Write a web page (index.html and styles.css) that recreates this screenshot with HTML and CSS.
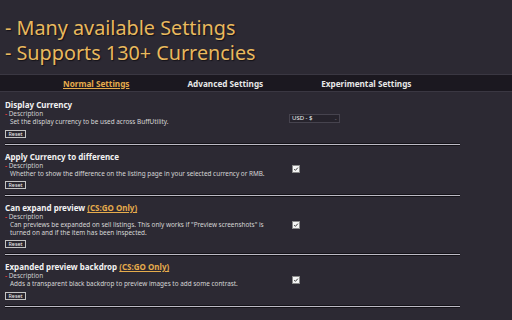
FILE: index.html
```html
<!DOCTYPE html>
<html lang="en">
<head>
    <meta charset="UTF-8">
    <meta name="viewport" content="width=device-width, initial-scale=1.0">
    <title>BuffUtility Settings</title>
    <link rel="stylesheet" href="styles.css">
</head>
<body>

    <!-- Promo header -->
    <div class="promo">
        <div class="promo-line">- Many available Settings</div>
        <div class="promo-line">- Supports 130+ Currencies</div>
    </div>

    <!-- Tabs -->
    <div class="tabs">
        <span class="tab active">Normal Settings</span>
        <span class="tab">Advanced Settings</span>
        <span class="tab">Experimental Settings</span>
    </div>

    <div class="settings">
        <div class="setting">
            <div class="setting-title">Display Currency</div>
            <div class="setting-row">
                <div class="setting-desc">
                    <div class="desc-label"><span class="dash">-</span> Description</div>
                    <div class="desc-text">Set the display currency to be used across BuffUtility.</div>
                </div>
                <div class="fake-select">USD - $<span class="caret">&#8964;</span></div>
            </div>
            <button class="reset">Reset</button>
            <div class="separator"></div>
        </div>

        <div class="setting">
            <div class="setting-title">Apply Currency to difference</div>
            <div class="setting-row">
                <div class="setting-desc">
                    <div class="desc-label"><span class="dash">-</span> Description</div>
                    <div class="desc-text">Whether to show the difference on the listing page in your selected currency or RMB.</div>
                </div>
                <span class="checkbox"><svg viewBox="0 0 8 8"><path d="M1.6 4.2 L3.2 5.8 L6.5 2.2" /></svg></span>
            </div>
            <button class="reset">Reset</button>
            <div class="separator"></div>
        </div>

        <div class="setting">
            <div class="setting-title">Can expand preview <span class="only">(CS:GO Only)</span></div>
            <div class="setting-row">
                <div class="setting-desc">
                    <div class="desc-label"><span class="dash">-</span> Description</div>
                    <div class="desc-text">Can previews be expanded on sell listings. This only works if "Preview screenshots" is turned on and if the item has been inspected.</div>
                </div>
                <span class="checkbox"><svg viewBox="0 0 8 8"><path d="M1.6 4.2 L3.2 5.8 L6.5 2.2" /></svg></span>
            </div>
            <button class="reset">Reset</button>
            <div class="separator"></div>
        </div>

        <div class="setting">
            <div class="setting-title">Expanded preview backdrop <span class="only">(CS:GO Only)</span></div>
            <div class="setting-row">
                <div class="setting-desc">
                    <div class="desc-label"><span class="dash">-</span> Description</div>
                    <div class="desc-text">Adds a transparent black backdrop to preview images to add some contrast.</div>
                </div>
                <span class="checkbox"><svg viewBox="0 0 8 8"><path d="M1.6 4.2 L3.2 5.8 L6.5 2.2" /></svg></span>
            </div>
            <button class="reset">Reset</button>
            <div class="separator"></div>
        </div>
    </div>

</body>
</html>
```

FILE: styles.css
```css
body {
    margin: 0;
    background: #2c2933;
    font-family: "Noto Sans", sans-serif;
    color: #eeeeee;
    overflow: hidden;
}

/* Big yellow header */
.promo {
    padding: 15px 5px 0;
}

.promo-line {
    font-size: 19.8px;
    line-height: 25px;
    color: #e9b95e;
    text-shadow: 1px 1px 1px #141218;
}

.tabs {
    margin-top: 9px;
    height: 18px;
    background: #1b1820;
    border-top: 1px solid #3a3742;
    border-bottom: 1px solid #3a3742;
    display: flex;
    align-items: center;
    gap: 58px;
    padding-left: 63px;
    box-sizing: border-box;
}

.tab {
    font-size: 8.2px;
    font-weight: bold;
    color: #e8e8e8;
}

.tab.active {
    color: #e6ac4c;
    text-decoration: underline;
}

.settings {
    width: 455px;
    margin-left: 5px;
    padding-top: 7px;
}

.setting {
    padding-top: 5px;
}

.setting:first-child {
    padding-top: 0;
}

.setting-title {
    font-size: 8px;
    font-weight: bold;
    line-height: 11px;
    color: #f2f2f2;
}

.only {
    color: #e6ac4c;
    text-decoration: underline;
}

.setting-row {
    display: flex;
    align-items: center;
}

.setting-desc {
    width: 284px;
    font-size: 6.4px;
    line-height: 7.5px;
}

.desc-label {
    color: #cfcfcf;
    line-height: 8px;
}

.dash {
    color: #e23a3a;
    font-weight: bold;
}

.desc-text {
    padding-left: 5px;
    max-width: 258px;
    color: #d6d6d6;
}

.fake-select {
    width: 51px;
    height: 9px;
    box-sizing: border-box;
    background: #26232c;
    border: 1px solid #46434e;
    font-size: 6px;
    line-height: 7px;
    padding-left: 2px;
    color: #f4f4f4;
    display: flex;
    justify-content: space-between;
    margin-top: 1px;
}

.caret {
    color: #77747e;
    font-size: 4px;
    padding-right: 2px;
}

.checkbox {
    width: 8px;
    height: 8px;
    box-sizing: border-box;
    background: #f5f5f5;
    border: 1px solid #8a8a8a;
    margin-left: 3px;
    display: flex;
}

.checkbox svg {
    width: 100%;
    height: 100%;
    fill: none;
    stroke: #111111;
    stroke-width: 1.1;
}

.reset {
    display: block;
    margin-top: 4px;
    width: 21px;
    height: 8px;
    padding: 0;
    background: #2a2730;
    border: 1px solid #c4c4c4;
    color: #eeeeee;
    font-family: "Noto Sans", sans-serif;
    font-size: 5.4px;
    line-height: 6px;
}

.separator {
    margin-top: 5px;
    height: 1px;
    background: #bcbac4;
    border-top: 1px solid #141218;
    border-bottom: 1px solid #141218;
}
```
